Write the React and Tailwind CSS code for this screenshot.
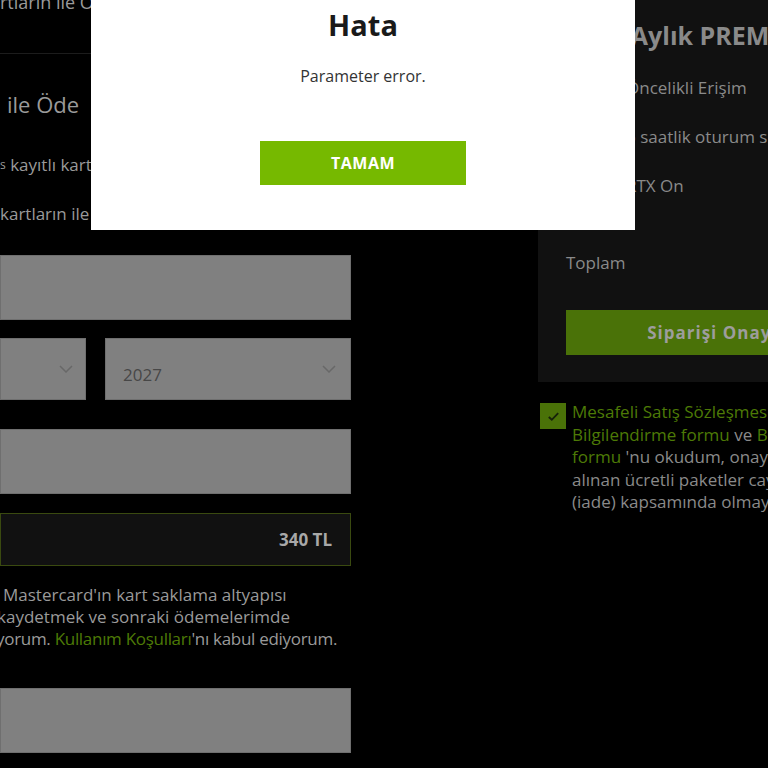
const FONT = "font-['Open_Sans','Noto_Sans',sans-serif]";

function Chevron() {
  return (
    <svg className="w-[14px] h-[8px]" viewBox="0 0 14 8" fill="none" stroke="#686868" strokeWidth={1.5}>
      <path d="M1 1l6 6 6-6" />
    </svg>
  );
}

function GreyInput() {
  return <div className="h-[65px] w-full bg-[#808080] border border-[#6f6f6f]" />;
}

function LeftColumn() {
  return (
    <div className="w-[351px] shrink-0 flex flex-col text-[#9a9a9a]">
      <div className="-mt-[9px] h-[22px] text-[18px] leading-[22px] whitespace-nowrap">rtların ile Ö</div>
      <div className="mt-[40px] h-px w-full bg-[#1c1c1c]" />
      <div className="mt-[37px] h-[26px] pl-[7px] text-[22px] leading-[26px] whitespace-nowrap">ile Öde</div>
      <div className="mt-[37px] h-[22px] text-[17px] leading-[22px] whitespace-nowrap">
        <sup className="text-[12px] relative -top-[2px]">s</sup> kayıtlı kartların
      </div>
      <div className="mt-[27px] h-[22px] text-[17px] leading-[22px] whitespace-nowrap">kartların ile ödeme</div>

      <div className="mt-[30px]">
        <GreyInput />
      </div>
      <div className="mt-[18px] flex gap-[19px]">
        <div className="h-[62px] w-[86px] bg-[#808080] border border-[#6f6f6f] flex items-center justify-end pr-[12px]">
          <Chevron />
        </div>
        <div className="h-[62px] flex-1 bg-[#808080] border border-[#6f6f6f] flex items-center justify-between pl-[17px] pr-[14px]">
          <span className="text-[17px] text-[#474747] pt-[12px]">2027</span>
          <Chevron />
        </div>
      </div>
      <div className="mt-[29px]">
        <GreyInput />
      </div>
      <div className="mt-[19px] h-[53px] bg-[#111111] border border-[#3a4a10] flex items-center justify-end pr-[18px]">
        <span className="text-[17px] font-bold text-[#a8a8a8]">340 TL</span>
      </div>
      <div className="mt-[18px] text-[17px] leading-[22px] whitespace-nowrap">
        <div className="pl-[3px]">Mastercard'ın kart saklama altyapısı</div>
        <div className="-ml-[3px]">kaydetmek ve sonraki ödemelerimde</div>
        <div className="-ml-[4px] tracking-[-0.3px]">
          yorum. <span className="text-[#4d7a06]">Kullanım Koşulları</span>'nı kabul ediyorum.
        </div>
      </div>
      <div className="mt-[38px]">
        <GreyInput />
      </div>
    </div>
  );
}

function CheckIcon({ className }) {
  return (
    <svg className={className} viewBox="0 0 16 16" fill="none" stroke="currentColor" strokeWidth={2}>
      <path d="M3 8.5l3.2 3L13 4.5" />
    </svg>
  );
}

const FEATURES = ['Öncelikli Erişim', '6 saatlik oturum süresi', 'RTX On'];

function RightColumn() {
  return (
    <div className="w-[360px] shrink-0 ml-[187px] flex flex-col">
      <div className="h-[382px] bg-[#111111] pl-[28px] pr-[28px] pt-[17px] flex flex-col text-[#8a8a8a]">
        <div className="ml-[44px] h-[36px] text-[25px] font-bold leading-[36px] whitespace-nowrap">1 Aylık PREMIUM</div>
        <div className="mt-[24px] flex flex-col gap-[27px]">
          {FEATURES.map((f) => (
            <div key={f} className="flex items-center h-[22px] text-[17px] whitespace-nowrap">
              <CheckIcon className="w-[18px] h-[18px] text-[#4d7a06] mr-[43px]" />
              <span className="-ml-[1px]">{f}</span>
            </div>
          ))}
        </div>
        <div className="mt-[55px] h-[22px] text-[17px] leading-[22px]">Toplam</div>
        <div className="mt-[36px] h-[45px] bg-[#4a7208] flex items-center justify-center text-[17px] font-bold tracking-[1px] text-[#9d9d9d] whitespace-nowrap">
          Siparişi Onayla
        </div>
      </div>
      <div className="mt-[21px] flex items-start pl-[2px]">
        <div className="w-[26px] h-[26px] shrink-0 bg-[#4a7208] flex items-center justify-center">
          <CheckIcon className="w-[15px] h-[15px] text-[#16220a]" />
        </div>
        <div className="ml-[6px] -mt-[2px] text-[17px] leading-[22.5px] text-[#8a8a8a] whitespace-nowrap">
          <div>
            <span className="text-[#4d7a06]">Mesafeli Satış Sözleşmesi</span>, Ön
          </div>
          <div>
            <span className="text-[#4d7a06]">Bilgilendirme formu</span> ve{' '}
            <span className="text-[#4d7a06]">Bireysel Abonelik</span>
          </div>
          <div>
            <span className="text-[#4d7a06]">formu</span> 'nu okudum, onaylıyorum. Satın
          </div>
          <div>alınan ücretli paketler cayma hakkı</div>
          <div>(iade) kapsamında olmayacaktır.</div>
        </div>
      </div>
    </div>
  );
}

function ErrorModal() {
  return (
    <div className="absolute left-[91px] top-0 w-[544px] h-[230px] bg-white flex flex-col items-center">
      <h2 className="mt-[5px] text-[29px] font-bold leading-[40px] text-[#1a1a1a]">Hata</h2>
      <p className="mt-[20px] text-[16px] leading-[22px] text-[#333333]">Parameter error.</p>
      <button className="mt-[54px] w-[206px] h-[44px] bg-[#76b900] text-white text-[16px] font-bold tracking-[0.5px]">
        TAMAM
      </button>
    </div>
  );
}

export default function App() {
  return (
    <div className={`relative w-[768px] h-[768px] overflow-hidden bg-black ${FONT}`}>
      <div className="flex">
        <LeftColumn />
        <RightColumn />
      </div>
      <ErrorModal />
    </div>
  );
}
